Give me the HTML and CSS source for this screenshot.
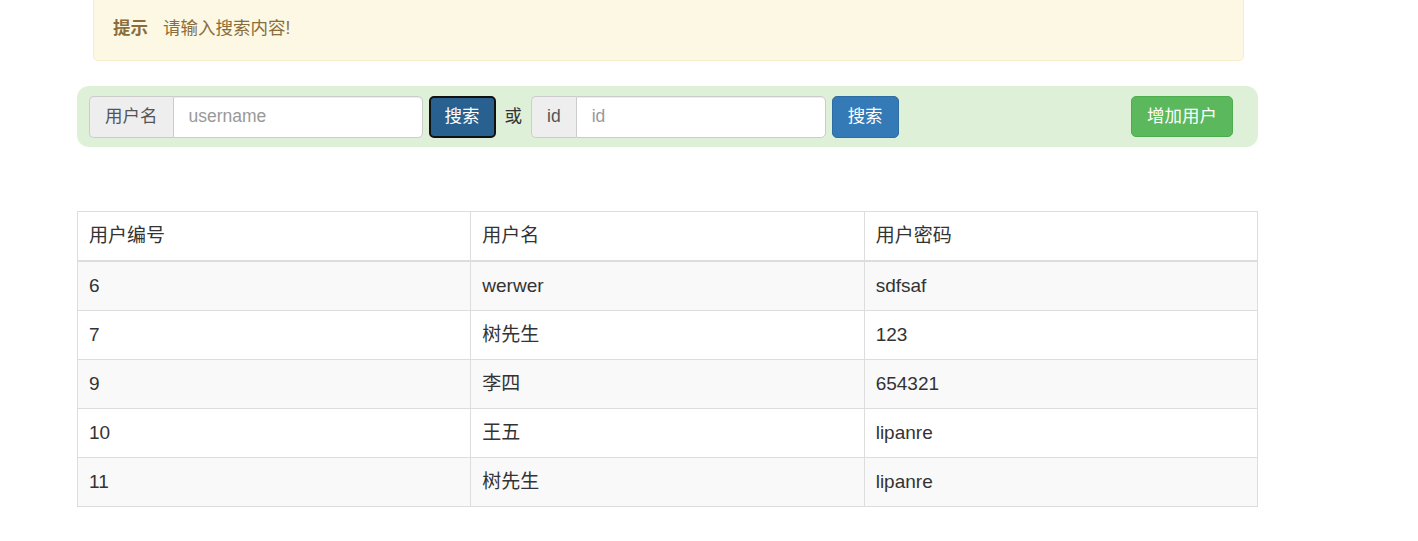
FILE: index.html
```html
<!DOCTYPE html>
<html lang="zh-CN">
<head>
<meta charset="utf-8">
<title>用户管理</title>
<link rel="stylesheet" href="styles.css">
</head>
<body>
<div class="container">
  <div class="alert"><strong class="alert-title">提示</strong><span>请输入搜索内容!</span></div>

  <form class="search-bar">
    <div class="input-group">
      <span class="addon">用户名</span>
      <input class="field" type="text" placeholder="username">
    </div>
    <button type="button" class="btn btn-primary is-active">搜索</button>
    <span class="or">或</span>
    <div class="input-group">
      <span class="addon">id</span>
      <input class="field" type="text" placeholder="id">
    </div>
    <button type="button" class="btn btn-primary">搜索</button>
    <button type="button" class="btn btn-success add-btn">增加用户</button>
  </form>

  <table class="table">
    <thead>
      <tr><th>用户编号</th><th>用户名</th><th>用户密码</th></tr>
    </thead>
    <tbody>
      <tr><td>6</td><td>werwer</td><td>sdfsaf</td></tr>
      <tr><td>7</td><td>树先生</td><td>123</td></tr>
      <tr><td>9</td><td>李四</td><td>654321</td></tr>
      <tr><td>10</td><td>王五</td><td>lipanre</td></tr>
      <tr><td>11</td><td>树先生</td><td>lipanre</td></tr>
    </tbody>
  </table>
</div>
</body>
</html>
```

FILE: styles.css
```css
* { box-sizing: border-box; }

html, body {
  margin: 0;
  padding: 0;
  background: #fff;
}

body {
  font-family: "Liberation Sans", "Noto Sans CJK SC", Arial, sans-serif;
  font-size: 17.5px;
  line-height: 25px;
  color: #333;
}

.container {
  width: 1181px;
  margin-left: 77px;
}

.alert {
  margin: 0 14px 0 16px;
  padding: 16px 19px 19px;
  height: 61px;
  background: #fcf8e3;
  border: 1px solid #faebcc;
  border-top: 0;
  border-radius: 0 0 5px 5px;
  color: #8a6d3b;
}

.alert-title {
  font-weight: bold;
  margin-right: 15px;
}

.search-bar {
  margin-top: 25px;
  height: 61px;
  padding: 10px 25px 10px 12px;
  background: #dff0d8;
  border-radius: 12px;
  display: flex;
  align-items: center;
}

.input-group {
  display: flex;
  height: 42px;
}

.addon {
  display: flex;
  align-items: center;
  padding: 0 15px;
  background: #eee;
  border: 1px solid #ccc;
  border-right: 0;
  border-radius: 5px 0 0 5px;
  color: #555;
}

.field {
  width: 250px;
  height: 42px;
  padding: 0 15px;
  border: 1px solid #ccc;
  border-radius: 0 5px 5px 0;
  font: inherit;
  color: #555;
  background: #fff;
  box-shadow: inset 0 1px 1px rgba(0,0,0,.075);
  outline: none;
}

.field::placeholder { color: #999; }

.btn {
  height: 42px;
  padding: 0 15px;
  margin-left: 6px;
  border: 1px solid transparent;
  border-radius: 5px;
  font: inherit;
  color: #fff;
  cursor: pointer;
}

.btn-primary {
  background: #337ab7;
  border-color: #2e6da4;
}

.btn-primary.is-active {
  background: #286090;
  border: 2px solid #111;
  padding: 0 14px;
}

.btn-success {
  background: #5cb85c;
  border-color: #4cae4c;
}

.add-btn {
  margin-left: auto;
  height: 41px;
}

.or {
  margin: 0 9px;
  color: #333;
}

.table {
  margin-top: 64px;
  width: 100%;
  border-collapse: collapse;
  table-layout: fixed;
  border: 1px solid #ddd;
  font-size: 19px;
}

.table th,
.table td {
  padding: 10px 11px;
  line-height: 28px;
  text-align: left;
  font-weight: normal;
  border: 1px solid #ddd;
  vertical-align: top;
}

.table thead th {
  border-bottom: 2px solid #ddd;
}

.table tbody tr:nth-child(odd) {
  background: #f9f9f9;
}
```
